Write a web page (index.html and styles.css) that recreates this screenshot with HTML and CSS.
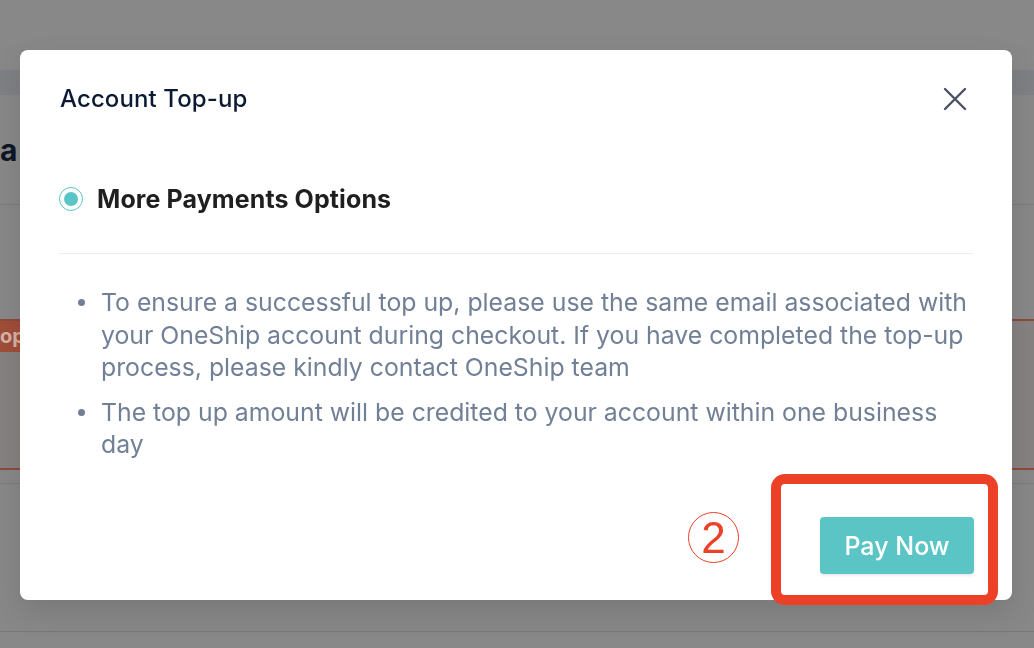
FILE: index.html
```html
<!DOCTYPE html>
<html lang="en">
<head>
    <meta charset="UTF-8">
    <meta name="viewport" content="width=device-width, initial-scale=1.0">
    <title>Account Top-up</title>
    <link rel="stylesheet" href="styles.css">
</head>
<body>

    <!-- Page behind the mask -->
    <div class="page">
        <div class="topbar"></div>
        <div class="page-title">a</div>
        <div class="plan-card">
            <div class="plan-tag">op</div>
        </div>
        <div class="page-rule"></div>
        <div class="page-foot"></div>
    </div>

    <!-- Top-up dialog -->
    <div class="modal">
        <div class="modal-header">
            <h2 class="modal-title">Account Top-up</h2>
            <button class="close-btn" aria-label="Close">
                <svg width="24" height="24" viewBox="0 0 24 24">
                    <path d="M2 2 L22 22 M22 2 L2 22" stroke="#4b5264" stroke-width="2.4" stroke-linecap="round" fill="none"/>
                </svg>
            </button>
        </div>

        <div class="modal-body">
            <label class="option">
                <span class="radio"><span class="radio-dot"></span></span>
                <span class="option-label">More Payments Options</span>
            </label>

            <ul class="notes">
                <li>To ensure a successful top up, please use the same email associated with your OneShip account during checkout. If you have completed the top-up process, please kindly contact OneShip team</li>
                <li>The top up amount will be credited to your account within one business day</li>
            </ul>
        </div>

        <div class="modal-footer">
            <button class="pay-btn">Pay Now</button>
        </div>

        <!-- annotation marks -->
        <div class="step-mark">2</div>
        <div class="step-box"></div>
    </div>

</body>
</html>
```

FILE: styles.css
```css
body {
    margin: 0;
    padding: 0;
    background-color: #888888;
    font-family: Inter, "Noto Sans", Arial, sans-serif;
    height: 648px;
    overflow: hidden;
}

.page {
    display: flex;
    flex-direction: column;
}

.topbar {
    margin-top: 70px;
    height: 25px;
    background-color: #7e8084;
}

.page-title {
    height: 109px;
    border-bottom: 1px solid #7b7b7b;
    font-size: 30px;
    font-weight: 700;
    color: #0f1626;
    line-height: 110px;
    padding-left: 0;
}

.plan-card {
    margin-top: 114px;
    height: 147px;
    background-color: #868281;
    border-top: 2px solid #8d4a3a;
    border-bottom: 2px solid #8d4a3a;
}

.plan-tag {
    width: 20px;
    height: 31px;
    background-color: #a04e38;
    color: #d8b3a8;
    font-size: 20px;
    font-weight: 700;
    line-height: 31px;
    overflow: hidden;
}

.page-rule {
    margin-top: 13px;
    border-top: 1px solid #7b7b7b;
}

.page-foot {
    margin-top: 147px;
    border-top: 1px solid #787878;
}

/* dialog */

.modal {
    position: fixed;
    left: 20px;
    top: 50px;
    width: 992px;
    height: 550px;
    box-sizing: border-box;
    padding: 0 39px 26px 39px;
    background-color: #fff;
    border-radius: 8px;
    box-shadow: 0 12px 30px rgba(0, 0, 0, 0.12);
    display: flex;
    flex-direction: column;
}

.modal-header {
    height: 98px;
    display: flex;
    align-items: center;
    justify-content: space-between;
}

.modal-title {
    margin: 0 0 0 1px;
    font-size: 24px;
    font-weight: 500;
    color: #0b1a33;
    line-height: 32px;
    letter-spacing: 0.1px;
}

.close-btn {
    border: none;
    background: none;
    padding: 0;
    margin-right: 6px;
    width: 24px;
    height: 24px;
    cursor: pointer;
}

.modal-body {
    flex: 1;
}

.option {
    display: flex;
    align-items: center;
    gap: 14px;
    padding: 39px 0 42px 0;
    border-bottom: 1px solid #ebebeb;
}

.radio {
    width: 22px;
    height: 22px;
    border: 1px solid #5bc5c5;
    border-radius: 50%;
    display: flex;
    align-items: center;
    justify-content: center;
}

.radio-dot {
    width: 14px;
    height: 14px;
    border-radius: 50%;
    background-color: #5bc5c5;
}

.option-label {
    font-size: 25px;
    font-weight: 700;
    color: #1f1f1f;
    line-height: 24px;
    letter-spacing: 0.1px;
}

.notes {
    margin: 32px 0 0 0;
    padding: 0;
    list-style: none;
    color: #718096;
    font-size: 24.8px;
    line-height: 32.5px;
}

.notes li {
    position: relative;
    padding-left: 42px;
}

.notes li::before {
    content: "";
    position: absolute;
    left: 19px;
    top: 13px;
    width: 7px;
    height: 7px;
    border-radius: 50%;
    background-color: #718096;
}

.notes li + li {
    margin-top: 12px;
}

.modal-footer {
    display: flex;
    justify-content: flex-end;
}

.pay-btn {
    width: 154px;
    height: 57px;
    border: none;
    border-radius: 4px;
    background-color: #5bc5c5;
    color: #fff;
    font-family: Inter, "Noto Sans", Arial, sans-serif;
    font-size: 25px;
    font-weight: 500;
    box-shadow: 0 2px 3px rgba(0, 0, 0, 0.08);
    margin-right: -1px;
    cursor: pointer;
}

.step-mark {
    position: absolute;
    left: 668px;
    top: 462px;
    width: 49px;
    height: 49px;
    border: 1.5px solid #ec4027;
    border-radius: 50%;
    color: #ec4027;
    font-family: "Liberation Sans", Arial, sans-serif;
    font-size: 44px;
    line-height: 50px;
    text-align: center;
}

.step-box {
    position: absolute;
    left: 751px;
    top: 424px;
    width: 207px;
    height: 111px;
    border: 10px solid #ec4027;
    border-radius: 14px;
}
```
